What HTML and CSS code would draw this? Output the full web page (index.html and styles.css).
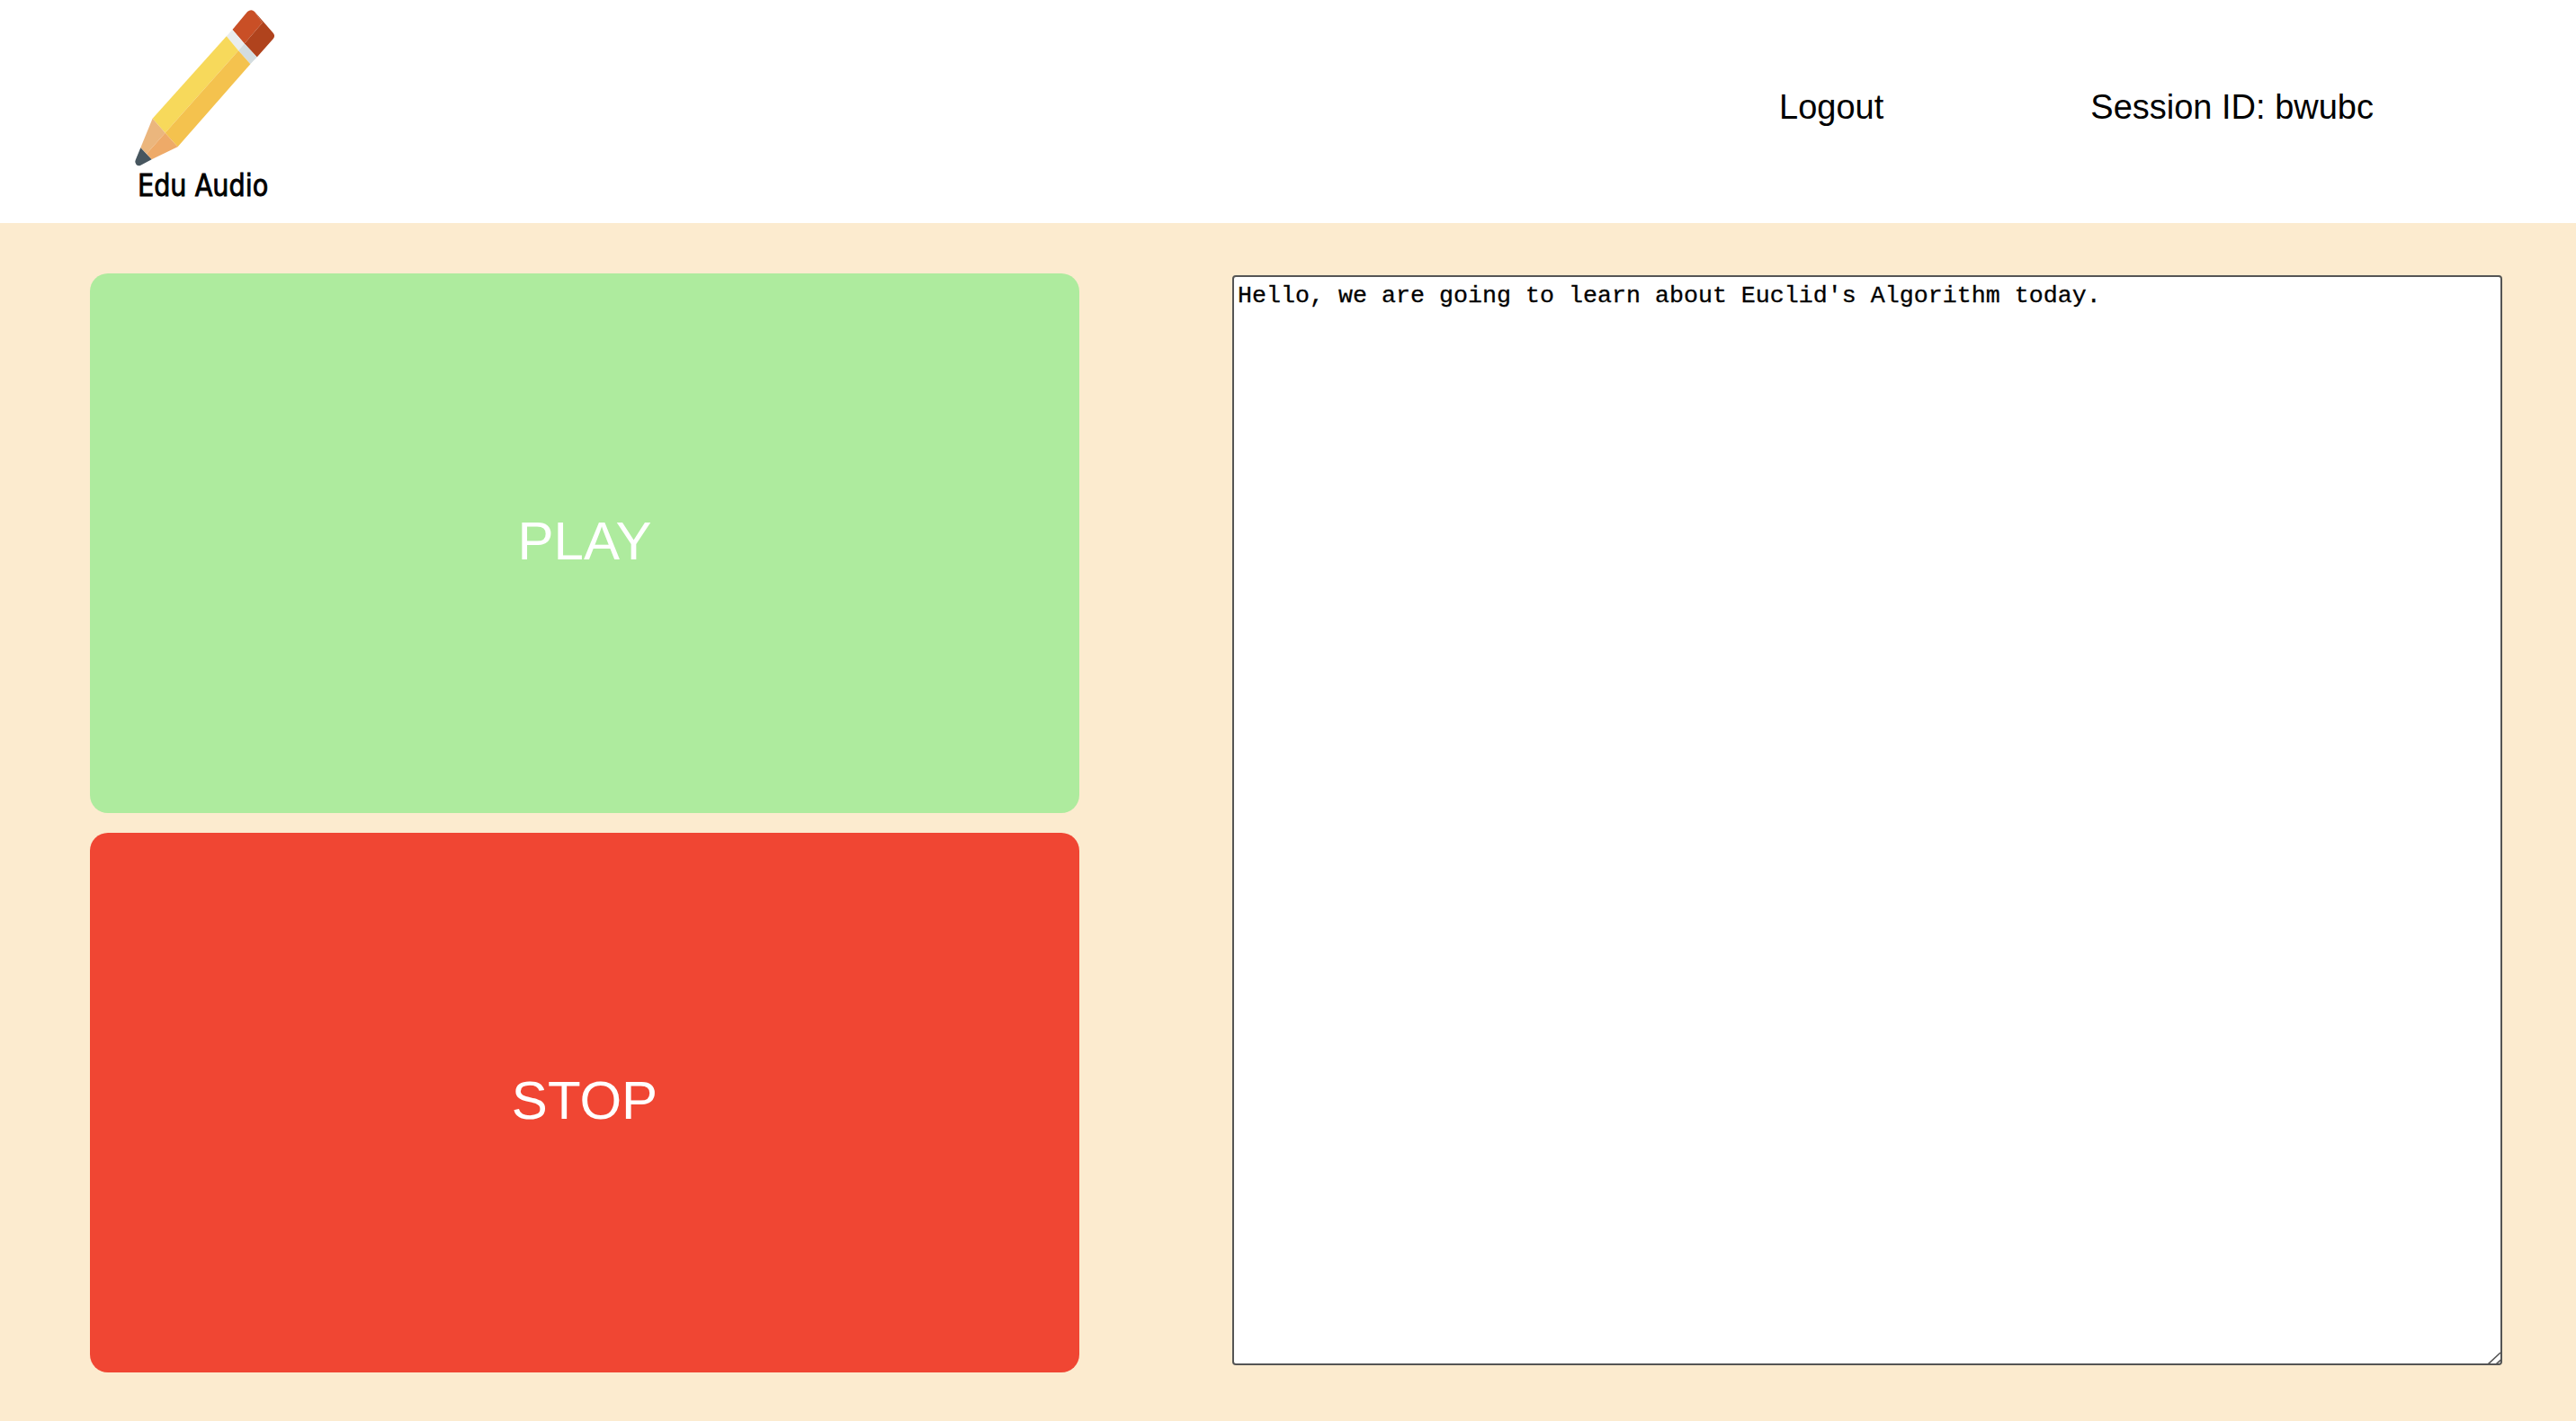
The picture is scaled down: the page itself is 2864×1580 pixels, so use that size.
FILE: index.html
```html
<!DOCTYPE html>
<html lang="en">
<head>
    <meta charset="UTF-8">
    <meta name="viewport" content="width=device-width, initial-scale=1.0">
    <title>Edu Audio</title>
    <link rel="stylesheet" href="styles.css">
</head>
<body>
    <header class="header">
        <div class="logo">
            <svg class="logo-icon" viewBox="80 20 490 550" aria-hidden="true">
                <path fill="#c94f26" d="M465 38q13-11 24 0l26 37-60 70-40-47z"/>
                <path fill="#b0431d" d="M489 38l61 70q10 11 1 21l-54 61-42-45 60-70z"/>
                <path fill="#e9edef" d="M395 120l20-22 40 47-20 23z"/>
                <path fill="#d3dcdf" d="M435 168l20-23 42 45-22 23z"/>
                <path fill="#f7d95b" d="M395 120l40 48-245 275-42-48z"/>
                <path fill="#f4c24e" d="M435 168l40 45-243 277-42-47z"/>
                <path fill="#ebb67d" d="M148 395l42 48-62 70-20-20z"/>
                <path fill="#eeaa68" d="M190 443l42 47-87 42-17-19z"/>
                <path fill="#47565f" d="M108 493l37 39-38 20q-8 3-14-4t-2-14z"/>
            </svg>
            <span class="logo-text">Edu Audio</span>
        </div>
        <nav class="nav">
            <a class="nav-link" href="#">Logout</a>
            <span class="session">Session ID: bwubc</span>
        </nav>
    </header>

    <main class="main">
        <div class="controls">
            <button class="big-button play">PLAY</button>
            <button class="big-button stop">STOP</button>
        </div>
        <textarea class="transcript">Hello, we are going to learn about Euclid's Algorithm today.</textarea>
    </main>
</body>
</html>
```

FILE: styles.css
```css
html, body {
    height: 100%;
}
body {
    margin: 0;
    display: flex;
    flex-direction: column;
    font-family: "Liberation Sans", Arial, sans-serif;
    background-color: #fcebcf;
    color: #000;
    overflow: hidden;
}
.header {
    height: 248px;
    flex: none;
    display: flex;
    justify-content: space-between;
    align-items: center;
    background-color: #fff;
}
.logo {
    display: flex;
    flex-direction: column;
    margin-left: 147px;
    align-self: flex-start;
    padding-top: 7px;
}
.logo-icon {
    width: 163px;
    height: 183px;
    display: block;
}
.logo-text {
    margin-top: -2px;
    margin-left: 6px;
    font-family: "DejaVu Sans", sans-serif;
    font-size: 33px;
    line-height: 38px;
    font-weight: 400;
    -webkit-text-stroke: 0.9px #000;
    transform: scaleX(0.87);
    transform-origin: left center;
    white-space: nowrap;
}
.nav {
    display: flex;
    align-items: center;
    gap: 230px;
    margin-right: 225px;
    padding-bottom: 10px;
    font-size: 38px;
}
.nav-link {
    color: #000;
    text-decoration: none;
}
.main {
    flex: 1;
    display: flex;
    justify-content: space-between;
    padding: 56px 82px 54px 100px;
}
.controls {
    width: 1100px;
    display: flex;
    flex-direction: column;
    gap: 22px;
}
.big-button {
    height: 600px;
    padding-bottom: 6px;
    border: none;
    border-radius: 20px;
    color: #fff;
    font-family: inherit;
    font-size: 60px;
    cursor: pointer;
}
.play {
    background-color: #aeeb9e;
}
.stop {
    background-color: #f04633;
}
.transcript {
    width: 1412px;
    height: 1212px;
    box-sizing: border-box;
    margin-top: 2px;
    padding: 6px 4px 4px 4px;
    border: 2px solid #555;
    border-radius: 4px;
    background-color: #fff;
    font-family: "Liberation Mono", "Courier New", monospace;
    font-size: 26.67px;
    line-height: 30px;
    -webkit-text-stroke: 0.3px #000;
    color: #000;
}
.transcript::-webkit-scrollbar {
    width: 18px;
    height: 18px;
}
.transcript::-webkit-resizer {
    background: url("data:image/svg+xml,%3Csvg xmlns='http://www.w3.org/2000/svg' width='18' height='18'%3E%3Cpath d='M1 16L15 3M10 16l5.300-5' stroke='%23555' stroke-width='1.600' fill='none'/%3E%3C/svg%3E") no-repeat;
}
```
